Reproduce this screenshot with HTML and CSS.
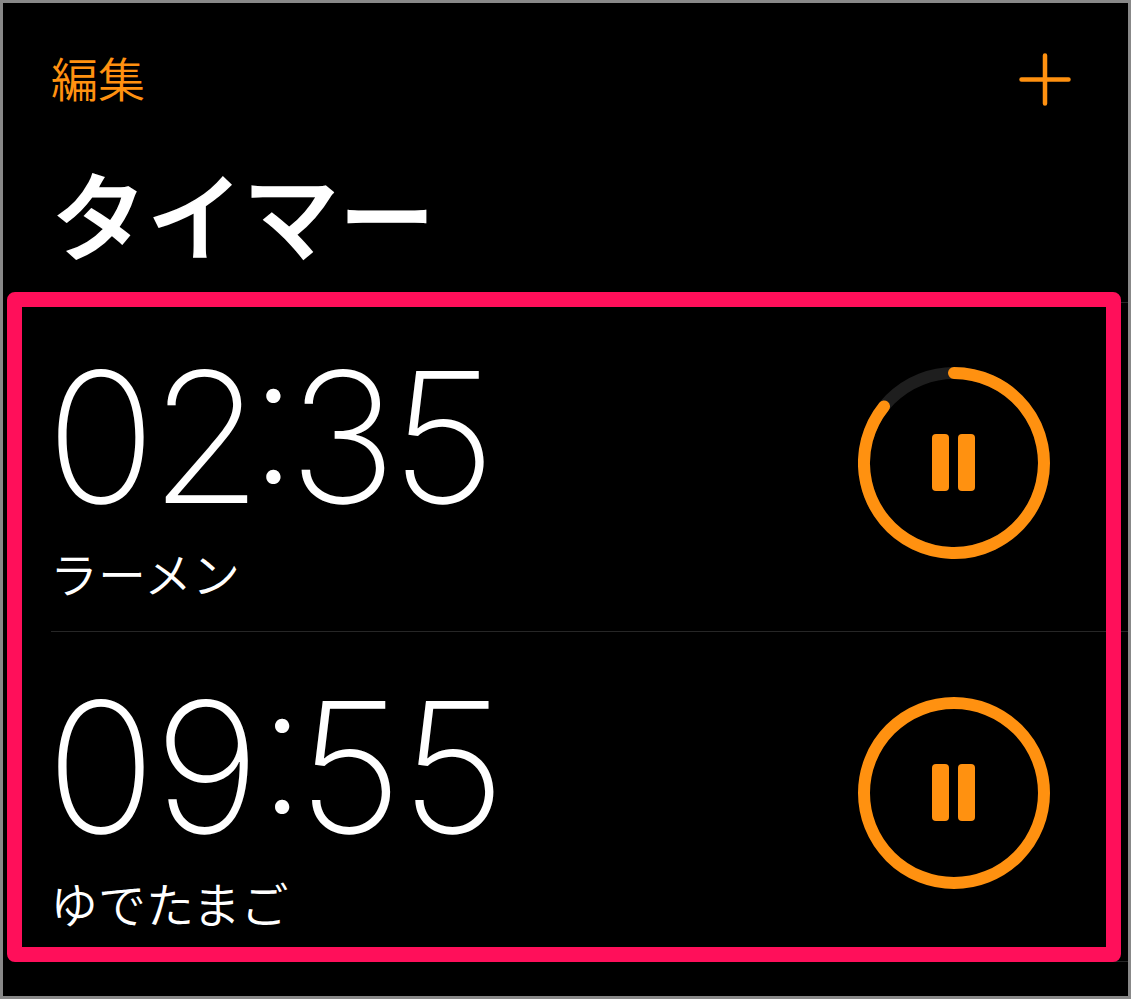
FILE: index.html
```html
<!DOCTYPE html>
<html lang="ja">
<head>
<meta charset="utf-8">
<title>タイマー</title>
<link rel="stylesheet" href="styles.css">
</head>
<body>
<main class="screen">
  <header class="topbar">
    <span class="edit">編集</span>
    <svg class="plus" width="52" height="53" viewBox="0 0 52 53"><path d="M26 2.500V50.500M2.500 26.500H49.500" fill="none" stroke="#ff9110" stroke-width="4.500" stroke-linecap="round"/></svg>
  </header>
  <h1 class="title">タイマー</h1>
  <section class="list">
    <article class="row">
      <div class="info">
        <div class="time">02<span class="colon">:</span>35</div>
        <div class="label">ラーメン</div>
      </div>
      <svg class="ring" width="192" height="192" viewBox="0 0 192 192">
        <circle cx="96" cy="96" r="90" fill="none" stroke="#1e1e1e" stroke-width="12"/>
        <path d="M96 6A90 90 0 1 1 26 39.4" fill="none" stroke="#ff9110" stroke-width="12" stroke-linecap="round"/>
        <rect x="74" y="67" width="17" height="57" rx="4" fill="#ff9110"/>
        <rect x="100" y="67" width="17" height="57" rx="4" fill="#ff9110"/>
      </svg>
    </article>
    <article class="row">
      <div class="info">
        <div class="time time-wide">09<span class="colon">:</span>55</div>
        <div class="label">ゆでたまご</div>
      </div>
      <svg class="ring" width="192" height="192" viewBox="0 0 192 192">
        <circle cx="96" cy="96" r="90" fill="none" stroke="#ff9110" stroke-width="12"/>
        <rect x="74" y="67" width="17" height="57" rx="4" fill="#ff9110"/>
        <rect x="100" y="67" width="17" height="57" rx="4" fill="#ff9110"/>
      </svg>
    </article>
  </section>
  <div class="highlight"></div>
</main>
</body>
</html>
```
FILE: styles.css
```css
* { box-sizing: border-box; }
html, body { margin: 0; height: 100%; background: #000; }
.screen {
  position: relative;
  width: 1131px;
  height: 999px;
  background: #000;
  border: 3px solid #888;
  overflow: hidden;
  font-family: "Noto Sans CJK JP", sans-serif;
}
.topbar {
  display: flex;
  justify-content: space-between;
  align-items: center;
  height: 53px;
  margin-top: 50px;
  padding: 0 57px 0 48px;
}
.edit { margin-bottom: 6px; font-size: 47px; line-height: 54px; font-weight: 350; color: #ff9110; }
.title {
  margin: 52px 0 0;
  padding-left: 48px;
  height: 144px;
  font-size: 96px;
  line-height: 107px;
  font-weight: 500;
  -webkit-text-stroke: 1.5px #fff;
  color: #fff;
}
.list { margin-left: 48px; border-top: 1px solid #262626; }
.row {
  display: flex;
  justify-content: space-between;
  align-items: flex-start;
  height: 329px;
  padding-right: 78px;
  border-bottom: 1px solid #262626;
}
.row + .row { height: 330px; padding-top: 1px; }
.info { padding-top: 54px; color: #fff; }
.time {
  margin-left: -5px;
  font-family: Inter, sans-serif;
  font-size: 182px;
  font-weight: 200;
  line-height: 160px;
  letter-spacing: -6px;
}
.time .colon {
  margin-left: -8px;
  letter-spacing: -10px;
  line-height: 0;
  vertical-align: 20px;
}
.time-wide { letter-spacing: -2px; }
.time-wide .colon { margin-left: -1px; letter-spacing: -10px; }
.label { margin: 25px 0 0 -1px; font-size: 48px; line-height: 60px; font-weight: 350; }
.ring { margin-top: 64px; }
.highlight {
  position: absolute;
  left: 4px;
  top: 289px;
  width: 1114px;
  height: 670px;
  border: 15px solid #ff0f5a;
  border-radius: 8px;
}
```
